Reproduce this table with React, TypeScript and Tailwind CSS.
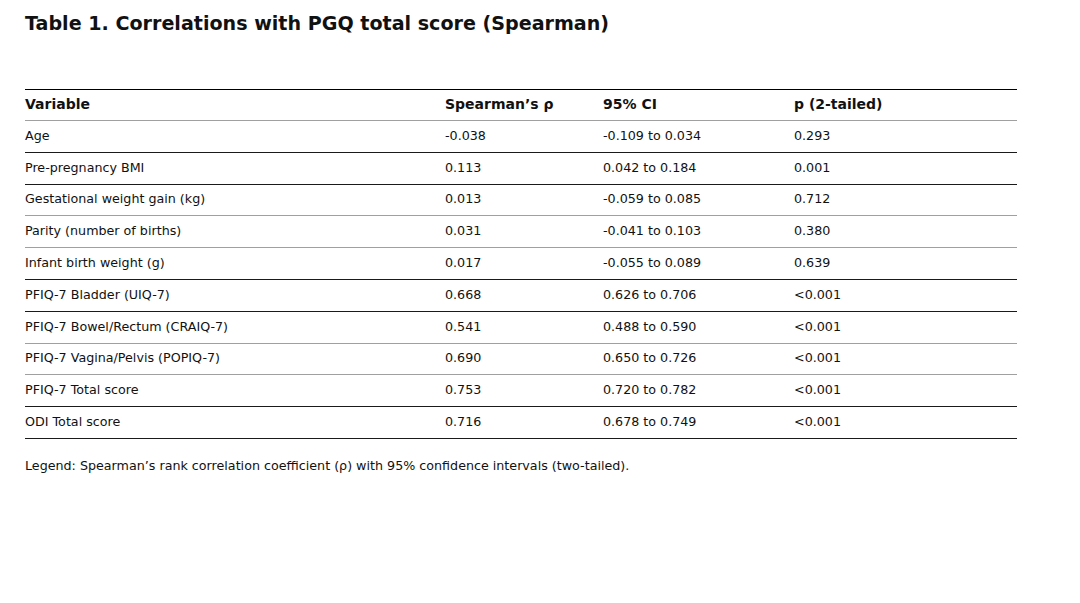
import React from "react";

const rows: [string, string, string, string, boolean][] = [
  ["Age", "-0.038", "-0.109 to 0.034", "0.293", false],
  ["Pre-pregnancy BMI", "0.113", "0.042 to 0.184", "0.001", false],
  ["Gestational weight gain (kg)", "0.013", "-0.059 to 0.085", "0.712", true],
  ["Parity (number of births)", "0.031", "-0.041 to 0.103", "0.380", true],
  ["Infant birth weight (g)", "0.017", "-0.055 to 0.089", "0.639", false],
  ["PFIQ-7 Bladder (UIQ-7)", "0.668", "0.626 to 0.706", "<0.001", false],
  ["PFIQ-7 Bowel/Rectum (CRAIQ-7)", "0.541", "0.488 to 0.590", "<0.001", true],
  ["PFIQ-7 Vagina/Pelvis (POPIQ-7)", "0.690", "0.650 to 0.726", "<0.001", true],
  ["PFIQ-7 Total score", "0.753", "0.720 to 0.782", "<0.001", false],
  ["ODI Total score", "0.716", "0.678 to 0.749", "<0.001", false],
];

export default function App() {
  return (
    <div
      className="w-[1080px] h-[603px] bg-white text-[#111] pl-[25px] pt-[12px]"
      style={{ fontFamily: '"DejaVu Sans", Verdana, sans-serif' }}
    >
      <h1 className="text-[19.1px] font-bold leading-[24px]">
        Table 1. Correlations with PGQ total score (Spearman)
      </h1>
      <table className="mt-[53px] w-[992px] border-collapse text-[12.7px]">
        <thead>
          <tr className="h-[31px] border-t border-b border-t-black border-b-[#a0a0a0]">
            <th className="w-[420px] text-left font-bold text-[14px] p-0 pb-[1px]">Variable</th>
            <th className="w-[158px] text-left font-bold text-[14px] p-0 pb-[1px]">Spearman’s ρ</th>
            <th className="w-[191px] text-left font-bold text-[14px] p-0 pb-[1px]">95% CI</th>
            <th className="text-left font-bold text-[14px] p-0 pb-[1px]">p (2-tailed)</th>
          </tr>
        </thead>
        <tbody>
          {rows.map((r) => (
            <tr
              key={r[0]}
              className={
                r[4]
                  ? "h-[31.8px] border-b border-[#a0a0a0]"
                  : "h-[31.8px] border-b border-[#1a1a1a]"
              }
            >
              <td className="p-0 pb-[2px]">{r[0]}</td>
              <td className="p-0 pb-[2px]">{r[1]}</td>
              <td className="p-0 pb-[2px]">{r[2]}</td>
              <td className="p-0 pb-[2px]">{r[3]}</td>
            </tr>
          ))}
        </tbody>
      </table>
      <p className="mt-[17px] text-[12.7px]">
        Legend: Spearman’s rank correlation coefficient (ρ) with 95% confidence intervals (two-tailed).
      </p>
    </div>
  );
}
